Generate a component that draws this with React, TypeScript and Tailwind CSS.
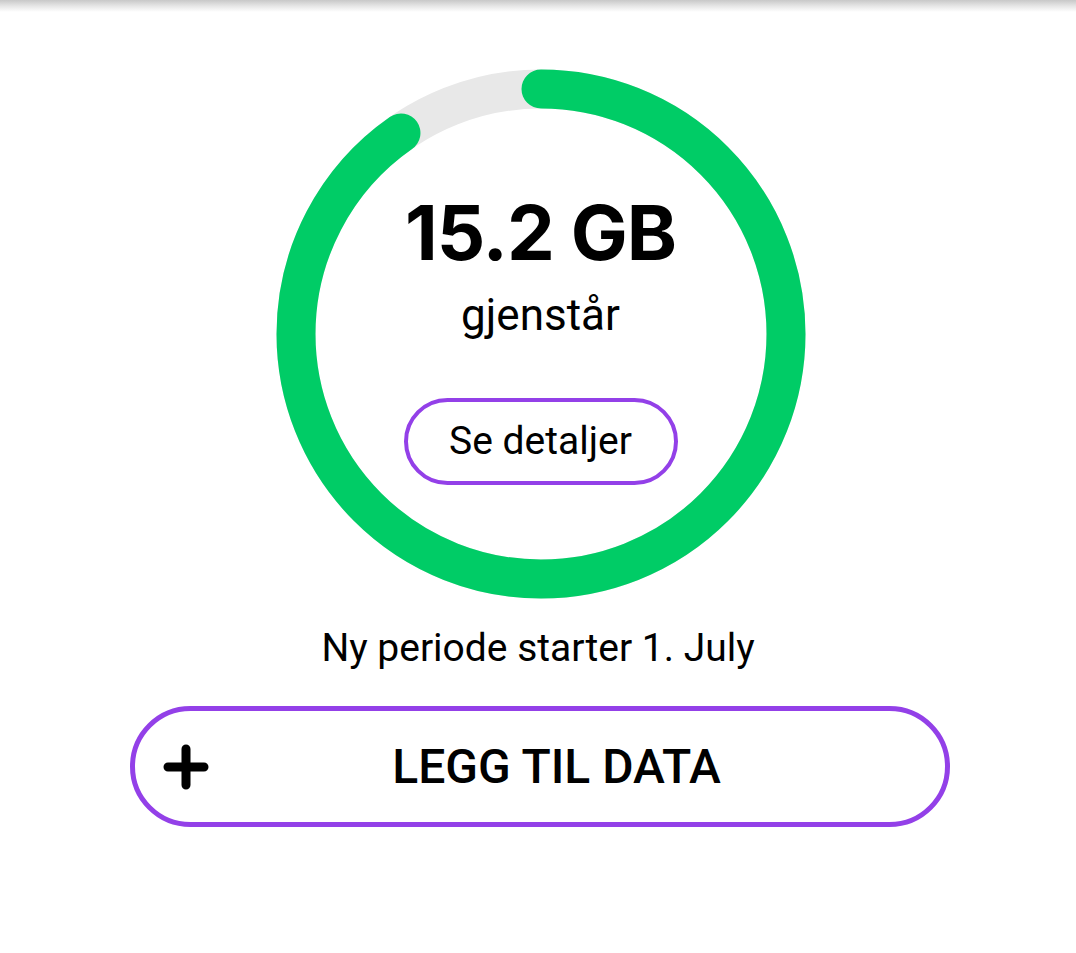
import React from 'react';

const R = 245;
const C = 2 * Math.PI * R;
const used = 35 / 360;

const UsageRing = () => {
  return (
    <svg width={530} height={530} viewBox="0 0 530 530" className="absolute inset-0">
      <circle cx={265} cy={265} r={R} fill="none" stroke="#e8e8e8" strokeWidth={39} />
      <circle
        cx={265}
        cy={265}
        r={R}
        fill="none"
        stroke="#00cc66"
        strokeWidth={39}
        strokeLinecap="round"
        strokeDasharray={`${C * (1 - used)} ${C}`}
        transform="rotate(-90 265 265)"
      />
    </svg>
  );
};

const PlusIcon = () => (
  <svg width={46} height={46} viewBox="0 0 46 46">
    <path d="M23 5v36M5 23h36" stroke="#000" strokeWidth={9} strokeLinecap="round" />
  </svg>
);

export default function App() {
  return (
    <div className="w-[1076px] h-[953px] bg-white relative overflow-hidden font-['Roboto',sans-serif] text-black">
      {/* header shadow */}
      <div className="h-[12px] bg-gradient-to-b from-[#c8c8c8] via-[#e6e6e6] to-white" />

      <div className="flex flex-col items-center">
        <div className="relative w-[530px] h-[530px] mt-[57px] ml-[5px]">
          <UsageRing />
          <div className="relative flex flex-col items-center pt-[123px]">
            <p className="font-['Inter',sans-serif] font-bold text-[76px] leading-[80px] tracking-[-1px]">15.2 GB</p>
            <p className="text-[44px] leading-[52px] mt-[17px]">gjenstår</p>
            <button className="mt-[57px] w-[274px] h-[87px] rounded-full border-[4px] border-[#9340e8] text-[39px] leading-none">
              Se detaljer
            </button>
          </div>
        </div>

        <p className="text-[39px] leading-[46px] mt-[26px]">Ny periode starter 1. July</p>

        <button className="mt-[35px] ml-[3px] w-[820px] h-[121px] rounded-full border-[5px] border-[#9340e8] flex items-center px-[28px]">
          <PlusIcon />
          <span className="flex-1 text-center font-medium text-[48px] leading-none pr-[12px]">LEGG TIL DATA</span>
        </button>
      </div>
    </div>
  );
}
